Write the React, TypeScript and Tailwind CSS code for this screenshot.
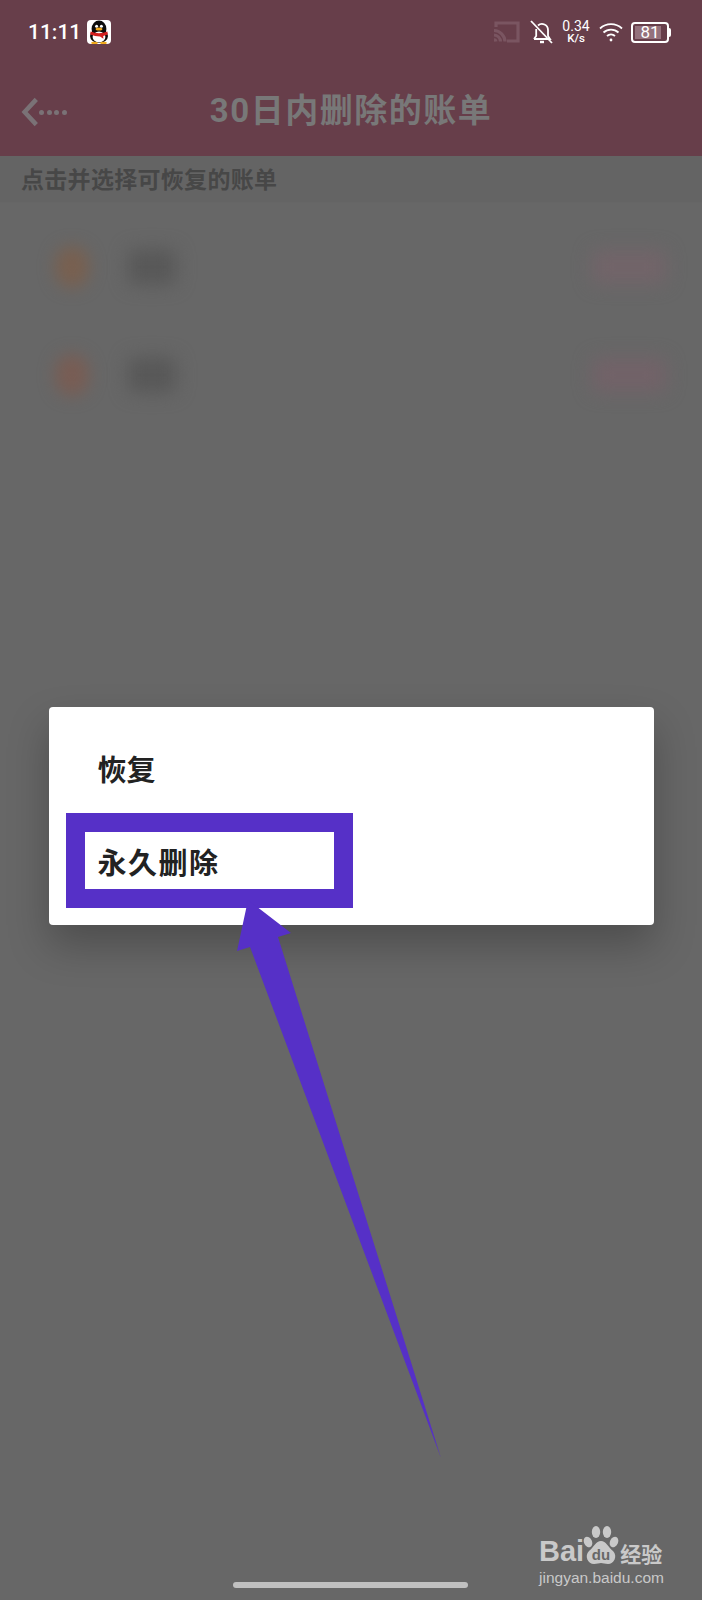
const sans = "font-['Roboto','Noto_Sans_CJK_SC',sans-serif]";

function QQIcon() {
  return (
    <div className="w-[24px] h-[24px] rounded-[4px] bg-white overflow-hidden ml-[6px]">
      <svg viewBox="0 0 24 24" className="w-full h-full">
        <ellipse cx="12" cy="9" rx="7.400" ry="8.400" fill="#0c0c0c" />
        <ellipse cx="12" cy="16" rx="9" ry="7" fill="#0c0c0c" />
        <ellipse cx="12" cy="17" rx="6.400" ry="5.400" fill="#fff" />
        <circle cx="9.600" cy="6.200" r="1.500" fill="#fff" />
        <circle cx="14.400" cy="6.200" r="1.500" fill="#fff" />
        <ellipse cx="12" cy="9" rx="3.400" ry="1.600" fill="#f0a91c" />
        <path d="M3.600 11.500 Q12 15 20.400 11.500 L20.800 14.400 Q17 15.800 16.200 16 L16.400 18.800 L13 16.400 Q8 16.400 3.200 14.400 Z" fill="#d3201f" />
        <ellipse cx="7.500" cy="23" rx="3.400" ry="1.200" fill="#f0a91c" />
        <ellipse cx="16.500" cy="23" rx="3.400" ry="1.200" fill="#f0a91c" />
      </svg>
    </div>
  );
}

function StatusIcons() {
  return (
    <div className="flex items-center">
      <svg viewBox="0 0 26 22" className="w-[26px] h-[22px]" fill="none" stroke="#7a5561" strokeWidth="3.200">
        <path d="M2 6V2h22v18H13" />
        <path d="M0 9.500a11.500 11.500 0 0 1 11 11M0 14a7 7 0 0 1 6.500 6.500M0 18.500a2.500 2.500 0 0 1 2 2" />
      </svg>
      <svg viewBox="0 0 24 26" className="w-[24px] h-[26px] ml-[10px]" fill="none" stroke="#fff" strokeWidth="1.800">
        <path d="M4 20h16l-2-3v-6a6 6 0 0 0-10-4.500M6.200 10v7l-2.200 3" />
        <path d="M1 2l21 22" />
        <path d="M10 23h4" strokeWidth="2.400" />
      </svg>
      <div className="ml-[9px] w-[26px] flex flex-col items-center text-white leading-none">
        <span className="text-[14px]">0.34</span>
        <span className="text-[11.500px] font-medium">K/s</span>
      </div>
      <svg viewBox="0 0 24 20" className="w-[24px] h-[20px] ml-[10px]" fill="none" stroke="#fff" strokeWidth="1.800">
        <path d="M1 6.500a16 16 0 0 1 22 0M4.500 10.500a11 11 0 0 1 15 0M8 14a6 6 0 0 1 8 0" />
        <circle cx="12" cy="18" r="1.400" fill="#fff" stroke="none" />
      </svg>
      <div className="ml-[8px] flex items-center">
        <div className="relative w-[38px] h-[21px] rounded-[4px] border-2 border-white flex items-center p-[2px]">
          <div className="w-[26px] h-full bg-[#94717c]" />
          <span className="absolute inset-0 flex items-center justify-center text-white text-[17px] leading-none">81</span>
        </div>
        <div className="w-[2px] h-[9px] bg-white rounded-r-sm" />
      </div>
    </div>
  );
}

function BlurRow({ dot, tag }: { dot: string; tag: string }) {
  return (
    <div className="h-[108px] flex items-center pl-[55px] pr-[36px]">
      <div className={`w-[34px] h-[42px] rounded-full blur-[8px] ${dot}`} />
      <div className="w-[48px] h-[36px] rounded-md ml-[39px] bg-[#585858] blur-[9px]" />
      <div className={`w-[74px] h-[34px] ml-auto rounded-md blur-[9px] ${tag}`} />
    </div>
  );
}

function Arrow() {
  return (
    <svg viewBox="0 0 702 1600" className="absolute inset-0 w-[702px] h-[1600px] pointer-events-none">
      <polygon points="248,900 291,933 278,937 441,1458 250,947 237,951" fill="#5630c7" />
    </svg>
  );
}

function Watermark() {
  return (
    <div className="absolute left-[539px] top-[1524px] w-[130px] text-[#c9c9c9]">
      <div className="flex items-end h-[41px]">
        <span className="text-[29px] font-bold leading-none mb-[-1px] font-['Liberation_Sans',sans-serif]">Bai</span>
        <svg viewBox="0 0 36 40" className="w-[36px] h-[40px] -ml-[1px] shrink-0">
          <ellipse cx="13" cy="7" rx="4.200" ry="6" fill="#c9c9c9" />
          <ellipse cx="24" cy="7" rx="4.200" ry="6" fill="#c9c9c9" />
          <ellipse cx="5" cy="17" rx="4" ry="5.500" transform="rotate(-25 5 17)" fill="#c9c9c9" />
          <ellipse cx="31" cy="17" rx="4" ry="5.500" transform="rotate(25 31 17)" fill="#c9c9c9" />
          <path d="M18 16c5 0 7 6 12 10 5 5 1 13-5 13-3 0-5-1-7-1s-4 1-7 1c-6 0-10-8-5-13 5-4 7-10 12-10Z" fill="#c9c9c9" />
          <text x="18" y="35" textAnchor="middle" fontSize="15" fontWeight="700" fill="#676767" fontFamily="Liberation Sans, sans-serif">du</text>
        </svg>
        <span className="text-[21px] font-bold leading-none ml-[1px] mb-[1px] whitespace-nowrap font-['Noto_Sans_CJK_SC',sans-serif]">经验</span>
      </div>
      <div className="text-[15.500px] leading-none mt-[5px] whitespace-nowrap font-['Liberation_Sans',sans-serif]">jingyan.baidu.com</div>
    </div>
  );
}

export default function App() {
  return (
    <div className={`relative w-[702px] h-[1600px] overflow-hidden bg-[#676767] flex flex-col ${sans}`}>
      {/* Header */}
      <header className="h-[156px] bg-[#673e4a] shrink-0">
        <div className="flex items-center justify-between h-[64px] pl-[28px] pr-[31px]">
          <div className="flex items-center">
            <span className="text-white text-[21px] font-medium leading-none">11:11</span>
            <QQIcon />
          </div>
          <StatusIcons />
        </div>
        <div className="relative h-[92px] flex items-center justify-center">
          <div className="absolute left-[21px] top-[32px] flex items-center">
            <svg viewBox="0 0 20 32" className="w-[18px] h-[32px]" fill="none" stroke="#7a7276" strokeWidth="5">
              <path d="M17 2 4 16l13 14" />
            </svg>
            <div className="flex gap-[2.500px]">
              <div className="w-[5px] h-[5px] rounded-full bg-[#7a7276]" />
              <div className="w-[5px] h-[5px] rounded-full bg-[#7a7276]" />
              <div className="w-[5px] h-[5px] rounded-full bg-[#7a7276]" />
              <div className="w-[5px] h-[5px] rounded-full bg-[#7a7276]" />
            </div>
          </div>
          <h1 className="text-[33px] font-bold text-[#787878] leading-none tracking-[1.500px] font-['Roboto','Noto_Sans_CJK_SC',sans-serif]">
            30日内删除的账单
          </h1>
        </div>
      </header>

      {/* Hint bar */}
      <div className="h-[47px] bg-[#646464] border-b border-[#666] flex items-center pl-[21px] pt-[3px] shrink-0">
        <span className="text-[23px] font-bold text-[#474747] leading-none tracking-[0.300px]">点击并选择可恢复的账单</span>
      </div>

      {/* Blurred list */}
      <div className="pt-[10px]">
        <BlurRow dot="bg-[#786050]" tag="bg-[#726469]" />
        <BlurRow dot="bg-[#785d54]" tag="bg-[#726268]" />
      </div>

      {/* Popup menu */}
      <div className="absolute inset-0 flex justify-center pt-[707px]">
        <div className="w-[605px] h-[218px] bg-white rounded-[4px] shadow-[0_20px_40px_rgba(0,0,0,0.25)] pt-[106px] pl-[17px] relative">
          <div className="absolute left-[49px] top-[50px] text-[29px] font-bold leading-none text-[#222]">恢复</div>
          <div className="w-[287px] h-[95px] border-[19px] border-[#5630c7] flex items-center pl-[13px] pt-[8px]">
            <span className="text-[29px] font-bold leading-none text-[#222] tracking-[1.500px]">永久删除</span>
          </div>
        </div>
      </div>

      <Arrow />
      <Watermark />

      {/* Home indicator */}
      <div className="absolute left-[233px] top-[1582px] w-[235px] h-[6px] rounded-full bg-[#c0c0c0]" />
    </div>
  );
}
